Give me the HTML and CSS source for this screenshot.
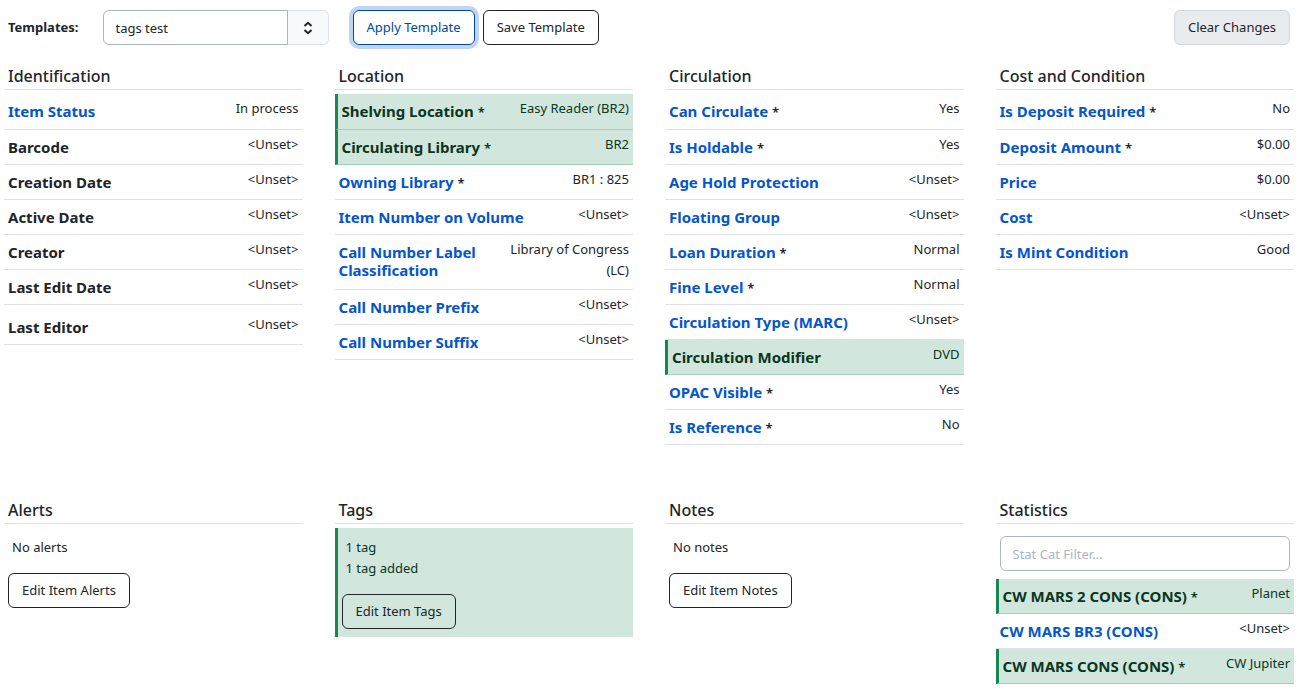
FILE: index.html
```html
<!DOCTYPE html>
<html lang="en">
<head>
    <meta charset="UTF-8">
    <meta name="viewport" content="width=device-width, initial-scale=1.0">
    <title>Item Attributes</title>
    <link rel="stylesheet" href="styles.css">
</head>
<body>
    <div class="toolbar">
        <label class="toolbar-label" for="template">Templates:</label>
        <div class="combobox">
            <input type="text" id="template" class="form-control" value="tags test">
            <button type="button" class="combobox-toggle" aria-label="Show templates">
                <svg width="12" height="16" viewBox="0 0 12 16" fill="none" stroke="currentColor" stroke-width="2">
                    <path d="M2.5 6L6 2.8 9.5 6M2.5 10L6 13.2 9.5 10"/>
                </svg>
            </button>
        </div>
        <div class="toolbar-actions">
            <button type="button" class="btn btn-primary">Apply Template</button>
            <button type="button" class="btn">Save Template</button>
        </div>
        <button type="button" class="btn btn-light">Clear Changes</button>
    </div>

    <main class="attributes">
        <section>
            <h2>Identification</h2>
            <div class="fields">
                <div class="field"><h3><a href="#">Item Status</a></h3><span>In process</span></div>
                <div class="field"><h3>Barcode</h3><span>&lt;Unset&gt;</span></div>
                <div class="field"><h3>Creation Date</h3><span>&lt;Unset&gt;</span></div>
                <div class="field"><h3>Active Date</h3><span>&lt;Unset&gt;</span></div>
                <div class="field"><h3>Creator</h3><span>&lt;Unset&gt;</span></div>
                <div class="field"><h3>Last Edit Date</h3><span>&lt;Unset&gt;</span></div>
                <div class="field spaced"><h3>Last Editor</h3><span>&lt;Unset&gt;</span></div>
            </div>
        </section>

        <section>
            <h2>Location</h2>
            <div class="fields">
                <div class="field changed"><h3><a href="#">Shelving Location</a> <small>*</small></h3><span>Easy Reader (BR2)</span></div>
                <div class="field changed"><h3><a href="#">Circulating Library</a> <small>*</small></h3><span>BR2</span></div>
                <div class="field"><h3><a href="#">Owning Library</a> <small>*</small></h3><span>BR1 : 825</span></div>
                <div class="field"><h3><a href="#">Item Number on Volume</a></h3><span>&lt;Unset&gt;</span></div>
                <div class="field"><h3><a href="#">Call Number Label Classification</a></h3><span>Library of Congress (LC)</span></div>
                <div class="field"><h3><a href="#">Call Number Prefix</a></h3><span>&lt;Unset&gt;</span></div>
                <div class="field"><h3><a href="#">Call Number Suffix</a></h3><span>&lt;Unset&gt;</span></div>
            </div>
        </section>

        <section>
            <h2>Circulation</h2>
            <div class="fields">
                <div class="field"><h3><a href="#">Can Circulate</a> <small>*</small></h3><span>Yes</span></div>
                <div class="field"><h3><a href="#">Is Holdable</a> <small>*</small></h3><span>Yes</span></div>
                <div class="field"><h3><a href="#">Age Hold Protection</a></h3><span>&lt;Unset&gt;</span></div>
                <div class="field"><h3><a href="#">Floating Group</a></h3><span>&lt;Unset&gt;</span></div>
                <div class="field"><h3><a href="#">Loan Duration</a> <small>*</small></h3><span>Normal</span></div>
                <div class="field"><h3><a href="#">Fine Level</a> <small>*</small></h3><span>Normal</span></div>
                <div class="field"><h3><a href="#">Circulation Type (MARC)</a></h3><span>&lt;Unset&gt;</span></div>
                <div class="field changed"><h3><a href="#">Circulation Modifier</a></h3><span>DVD</span></div>
                <div class="field"><h3><a href="#">OPAC Visible</a> <small>*</small></h3><span>Yes</span></div>
                <div class="field"><h3><a href="#">Is Reference</a> <small>*</small></h3><span>No</span></div>
            </div>
        </section>

        <section>
            <h2>Cost and Condition</h2>
            <div class="fields">
                <div class="field"><h3><a href="#">Is Deposit Required</a> <small>*</small></h3><span>No</span></div>
                <div class="field"><h3><a href="#">Deposit Amount</a> <small>*</small></h3><span>$0.00</span></div>
                <div class="field"><h3><a href="#">Price</a></h3><span>$0.00</span></div>
                <div class="field"><h3><a href="#">Cost</a></h3><span>&lt;Unset&gt;</span></div>
                <div class="field"><h3><a href="#">Is Mint Condition</a></h3><span>Good</span></div>
            </div>
        </section>

        <section>
            <h2>Alerts</h2>
            <div class="summary">
                <p>No alerts</p>
                <button type="button" class="btn">Edit Item Alerts</button>
            </div>
        </section>

        <section>
            <h2>Tags</h2>
            <div class="summary changed">
                <p>1 tag<br>1 tag added</p>
                <button type="button" class="btn">Edit Item Tags</button>
            </div>
        </section>

        <section>
            <h2>Notes</h2>
            <div class="summary">
                <p>No notes</p>
                <button type="button" class="btn">Edit Item Notes</button>
            </div>
        </section>

        <section>
            <h2>Statistics</h2>
            <div class="filter">
                <input type="text" class="form-control" placeholder="Stat Cat Filter..." aria-label="Stat Cat Filter">
            </div>
            <div class="stats">
                <div class="field changed"><h3><a href="#">CW MARS 2 CONS (CONS)</a> <small>*</small></h3><span>Planet</span></div>
                <div class="field"><h3><a href="#">CW MARS BR3 (CONS)</a></h3><span>&lt;Unset&gt;</span></div>
                <div class="field changed"><h3><a href="#">CW MARS CONS (CONS)</a> <small>*</small></h3><span>CW Jupiter</span></div>
            </div>
        </section>
    </main>
</body>
</html>
```
FILE: styles.css
```css
* {
    box-sizing: border-box;
}

body {
    margin: 0;
    padding: 10px 13px 10px 4px;
    font-family: "Noto Sans", "Open Sans", sans-serif;
    font-size: 13px;
    line-height: 21px;
    color: #212529;
    background-color: #ffffff;
}

h2, h3, p {
    margin: 0;
}

a {
    color: #0556cc;
    text-decoration: none;
}

/* Toolbar */
.toolbar {
    display: flex;
    align-items: center;
    gap: 24px;
    padding: 0 4px;
    margin-bottom: 20px;
}

.toolbar-label {
    font-weight: bold;
}

.combobox {
    display: flex;
    width: 226px;
}

.toolbar-actions {
    display: flex;
    gap: 8px;
    margin-right: auto;
}

.form-control {
    width: 100%;
    height: 35px;
    padding: 6px 12px;
    border: 1px solid #adb5bd;
    border-radius: 6px;
    background-color: #ffffff;
    font: inherit;
    color: #212529;
}

.form-control::placeholder {
    color: #adb5bd;
    opacity: 1;
}

.combobox .form-control {
    flex: 1;
    min-width: 0;
    border-radius: 6px 0 0 6px;
}

.combobox-toggle {
    display: flex;
    align-items: center;
    justify-content: center;
    width: 41px;
    padding: 0;
    border: 1px solid #dee2e6;
    border-left: none;
    border-radius: 0 6px 6px 0;
    background-color: #f8f9fa;
    color: #212529;
}

.btn {
    height: 35px;
    padding: 6px 13px;
    border: 1px solid #212529;
    border-radius: 6px;
    background-color: transparent;
    font: inherit;
    color: #212529;
    white-space: nowrap;
    cursor: pointer;
}

.btn-primary {
    border-color: #0047a8;
    color: #0047a8;
    box-shadow: 0 0 0 4px #c1d5f2;
}

.btn-light {
    border-color: #d3d6da;
    background-color: #e9ecef;
}

/* Attribute columns */
.attributes {
    display: grid;
    grid-template-columns: repeat(4, 1fr);
    gap: 54px 32px;
}

h2 {
    padding: 0 4px 2px;
    margin-bottom: 4px;
    border-bottom: 1px solid #dee2e6;
    font-size: 16px;
    font-weight: 500;
    line-height: 22px;
}

.field {
    display: flex;
    justify-content: space-between;
    padding: 0 4px;
    border-bottom: 1px solid #dee2e6;
}

.field h3 {
    flex: 1;
    padding: 8px 0;
    font-size: 15px;
    font-weight: bold;
    line-height: 18px;
}

.field small {
    font-size: 13px;
    font-weight: 600;
    line-height: 1;
}

.field span {
    max-width: 45%;
    padding: 4px 0 8px;
    text-align: right;
}

.fields .field:first-child h3 {
    padding-bottom: 9px;
}

.spaced {
    padding-top: 5px;
}

.changed {
    border-left: 3px solid #198754;
    border-bottom-color: #a3cfbb;
    background-color: #d1e7dd;
    color: #0a3622;
}

.changed a {
    color: inherit;
}

.summary {
    padding: 9px 4px 8px;
}

.summary p {
    padding: 0 4px;
    margin-bottom: 15px;
}

.filter {
    padding: 8px 4px;
}
```
